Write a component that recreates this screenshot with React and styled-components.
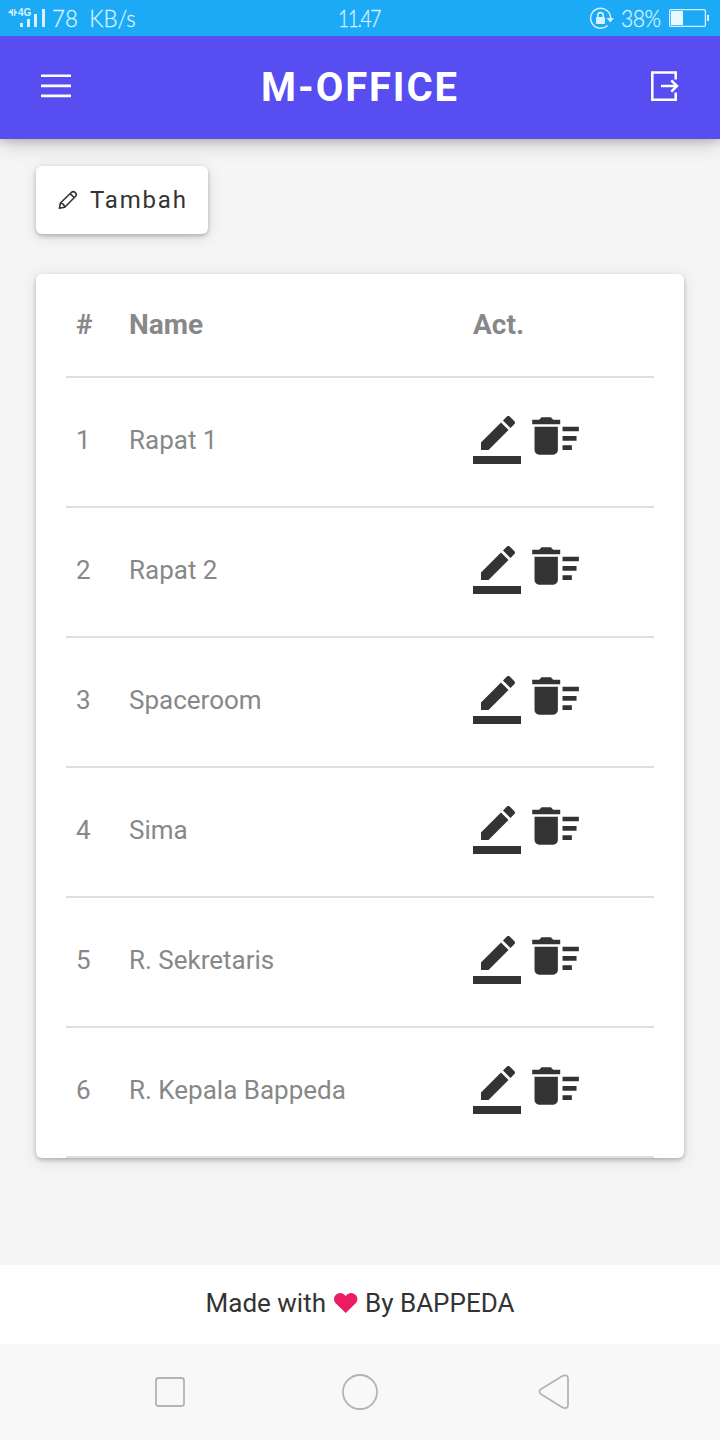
import React from "react";
import styled, { createGlobalStyle } from "styled-components";

const GlobalStyle = createGlobalStyle`
  * { box-sizing: border-box; }
  body { margin: 0; background: #f5f5f5; font-family: Roboto, "Noto Sans", sans-serif; color: #333; }
  svg { display: block; flex: none; }
`;

const Screen = styled.div`
  width: 720px;
  height: 1440px;
  display: flex;
  flex-direction: column;
  overflow: hidden;
  background: #f5f5f5;
`;

const StatusBar = styled.div`
  height: 36px;
  flex: none;
  display: grid;
  grid-template-columns: 1fr auto 1fr;
  align-items: center;
  padding: 0 11px 0 8px;
  position: relative;
  z-index: 1;
  background: #1caaf6;
  color: #dcf3ff;
  font-family: Lato, sans-serif;
  font-weight: 300;
  font-size: 24px;
  line-height: 36px;
`;

const StatusGroup = styled.div`
  display: flex;
  align-items: center;
  justify-content: ${(p) => (p.$end ? "flex-end" : "flex-start")};
`;

const StatusText = styled.span`
  width: ${(p) => p.$width}px;
  margin: 0 ${(p) => p.$right || 0}px 0 ${(p) => p.$left || 0}px;
  letter-spacing: ${(p) => p.$spacing || 0}px;
  word-spacing: ${(p) => p.$word || 0}px;
  white-space: nowrap;
  -webkit-text-stroke: 0.3px currentColor;
  transform: scaleX(${(p) => p.$scale || 1});
  transform-origin: left;
`;

const AppBar = styled.header`
  height: 103px;
  flex: none;
  display: flex;
  align-items: center;
  justify-content: space-between;
  padding: 0 40px;
  background: #574df1;
  box-shadow: 0 4px 20px rgba(0, 0, 0, 0.2), 0 2px 8px rgba(0, 0, 0, 0.16);

  svg {
    margin-bottom: 4px;
  }
`;

const Title = styled.h1`
  margin: 0 2px 0 0;
  color: #fff;
  font-size: 40px;
  line-height: 48px;
  font-weight: 700;
  letter-spacing: 1.9px;
`;

const Content = styled.main`
  flex: 1;
  display: flex;
  flex-direction: column;
  align-items: flex-start;
  gap: 40px;
  padding: 27px 36px 0;
`;

const AddButton = styled.button`
  display: flex;
  align-items: center;
  gap: 12px;
  width: 172px;
  height: 68px;
  padding: 0 0 0 22px;
  border: 0;
  border-radius: 6px;
  background: #fff;
  color: #333;
  font: 400 24px/36px Roboto, sans-serif;
  letter-spacing: 1.8px;
  box-shadow: 0 2px 4px rgba(0, 0, 0, 0.24), 0 3px 16px rgba(0, 0, 0, 0.11);
`;

const Card = styled.section`
  width: 100%;
  padding: 0 30px;
  border-radius: 6px;
  background: #fff;
  box-shadow: 0 2px 4px rgba(0, 0, 0, 0.24), 0 3px 16px rgba(0, 0, 0, 0.11);
`;

const Row = styled.div`
  display: grid;
  grid-template-columns: 53px 344px 1fr;
  align-items: center;
  height: ${(p) => (p.$head ? 104 : 130)}px;
  padding: 0 10px ${(p) => (p.$head ? 2 : 4)}px;
  border-bottom: 2px solid #dfdfdf;
  color: #888;
  font-size: ${(p) => (p.$head ? 28 : 26)}px;
  font-weight: ${(p) => (p.$head ? 700 : 400)};
`;

const Actions = styled.div`
  display: flex;
  align-items: center;
  gap: 7px;
  color: #333;
`;

const EditIcon = styled.svg`
  width: 48px;
  height: 48px;
  fill: currentColor;
`;

const SweepIcon = styled.svg`
  width: 56px;
  height: 56px;
  margin-top: -8px;
  fill: currentColor;
`;

const Footer = styled.footer`
  height: 79px;
  flex: none;
  display: flex;
  align-items: center;
  justify-content: center;
  padding-bottom: 3px;
  background: #fff;
  color: #333;
  font-size: 26px;
`;

const Heart = styled.svg`
  width: 24px;
  height: 22px;
  margin: 0 7px 0 8px;
  fill: #ec1c64;
`;

const NavBar = styled.nav`
  height: 96px;
  flex: none;
  display: grid;
  grid-template-columns: 1fr 38px 1fr;
  align-items: center;
  padding: 0 150px;
  background: #f8f8f8;
`;

const NavIcon = styled.svg`
  justify-self: ${(p) => p.$align || "center"};
  fill: none;
  stroke: #b4b4b4;
  stroke-width: 1.8;
  stroke-linejoin: round;
`;

const rooms = ["Rapat 1", "Rapat 2", "Spaceroom", "Sima", "R. Sekretaris", "R. Kepala Bappeda"];

function Signal() {
  return (
    <svg width="38" height="36" viewBox="8 0 38 36" fill="#d6f1ff">
      <path d="M8 12.4l3-3v2h.7V9h1.5v7h-1.5v-2.4H11zM14.2 9h1.200v2.400h1.200l.9 1-.9 1h-1.200V16h-1.200z" />
      <text x="18" y="16.4" fontFamily="Liberation Sans, sans-serif" fontWeight="700" fontSize="10">4G</text>
      <path d="M20 23h3v4h-3zM27 19h3v8h-3zM34 14h3v13h-3zM42 9h3v18h-3z" />
    </svg>
  );
}

function RotationLock() {
  return (
    <svg width="25" height="36" viewBox="590 0 25 36">
      <path d="M610.6 19a10 10 0 1 0-3 6.4" fill="none" stroke="#d6f1ff" strokeWidth="1.4" />
      <path d="M606.5 18h7.5l-3.7 4.5z" fill="#d6f1ff" />
      <rect x="596" y="17" width="9" height="7" rx="1" fill="#d6f1ff" />
      <path d="M597.8 17.5v-2.2a2.7 2.7 0 0 1 5.4 0v2.2" fill="none" stroke="#d6f1ff" strokeWidth="1.6" />
    </svg>
  );
}

function Battery() {
  return (
    <svg width="40" height="36" viewBox="669 0 40 36">
      <rect x="669.6" y="9.6" width="35.8" height="16.8" rx="1.5" fill="none" stroke="#d6f1ff" strokeWidth="1.3" />
      <path d="M671 11h12v14h-12z" fill="#ebf8ff" />
      <path d="M707 15h2v6h-2z" fill="#d6f1ff" />
    </svg>
  );
}

function MenuIcon() {
  return (
    <svg width="32" height="32" viewBox="40 70 32 32" fill="#fff">
      <path d="M41 74.4h30v2.6H41zM41 84.4h30v2.8H41zM41 94.4h30v2.8H41z" />
    </svg>
  );
}

function LogoutIcon() {
  return (
    <svg width="30" height="32" viewBox="650 70 30 32" fill="none" stroke="#fff" strokeWidth="2.5">
      <path d="M675.7 79.5v-7.1h-23.4v27.3h23.4v-7.3" />
      <path d="M661 86h16M671.3 80.4l5.7 5.6-5.7 5.6" />
    </svg>
  );
}

function PencilIcon() {
  return (
    <svg width="20" height="20" viewBox="58 189 20 20" fill="none" stroke="#333" strokeWidth="1.6" strokeLinejoin="round">
      <path d="M59.4 207.3l1-5.3 10.9-10.5c1.2-1.1 2.6-1.200 4 .1s1.300 2.600.1 3.900L64.700 206.200z" />
      <path d="M60.7 202.200c2.200.2 3.600 1.500 4 4M70.200 192.600l4.200 4.200" />
    </svg>
  );
}

function RoomRow({ number, name }) {
  return (
    <Row>
      <span>{number}</span>
      <span>{name}</span>
      <Actions>
        <EditIcon viewBox="0 0 24 24">
          <path d="M17.75 7L14 3.25l-10 10V17h3.75l10-10zm2.960-2.960c.39-.39.39-1.020 0-1.410L18.370.29a.996.996 0 0 0-1.410 0L15 2.250 18.750 6l1.960-1.960z" />
          <path d="M0 20h24v4H0z" />
        </EditIcon>
        <SweepIcon viewBox="0.2 0 24 24">
          <path d="M15 16h4v2h-4zm0-8h7v2h-7zm0 4h6v2h-6zM3 18c0 1.100.9 2 2 2h6c1.100 0 2-.9 2-2V8H3v10zM14 5h-3l-1-1H6L5 5H2v2h12z" />
        </SweepIcon>
      </Actions>
    </Row>
  );
}

export default function App() {
  return (
    <Screen>
      <GlobalStyle />
      <StatusBar>
        <StatusGroup>
          <Signal />
          <StatusText $width={86} $left={6} $scale={0.925} $word={6}>78 KB/s</StatusText>
        </StatusGroup>
        <StatusText $width={41} $scale={0.8} $spacing={-1.8}>11.47</StatusText>
        <StatusGroup $end>
          <RotationLock />
          <StatusText $width={40} $left={6} $right={8} $scale={0.88} $spacing={-0.5}>38%</StatusText>
          <Battery />
        </StatusGroup>
      </StatusBar>
      <AppBar>
        <MenuIcon />
        <Title>M-OFFICE</Title>
        <LogoutIcon />
      </AppBar>
      <Content>
        <AddButton>
          <PencilIcon />
          Tambah
        </AddButton>
        <Card>
          <Row $head>
            <span>#</span>
            <span>Name</span>
            <span>Act.</span>
          </Row>
          {rooms.map((name, i) => (
            <RoomRow key={name} number={i + 1} name={name} />
          ))}
        </Card>
      </Content>
      <Footer>
        <span>Made with</span>
        <Heart viewBox="0.3 0 24 22">
          <path d="M12 21L2 11.2C-.8 8.2 0 3.300 3.700 1.700 6.700.4 9.800 1.300 12 4c2.200-2.700 5.300-3.600 8.300-2.300C24 3.300 24.800 8.200 22 11.200z" />
        </Heart>
        <span>By BAPPEDA</span>
      </Footer>
      <NavBar>
        <NavIcon $align="start" width="36" height="32" viewBox="-4 0 36 32">
          <rect x="2" y="2" width="28" height="28" rx="2.5" />
        </NavIcon>
        <NavIcon width="38" height="38" viewBox="0 0 38 38">
          <circle cx="19" cy="19" r="17" />
        </NavIcon>
        <NavIcon $align="end" width="32" height="36" viewBox="538 1374 32 36">
          <path d="M540.8 1389.3L562 1376.200c3-1.800 6-.8 6 2v27c0 2.800-3 3.800-6 2L540.800 1394c-1.800-1.200-1.800-3.500 0-4.700z" />
        </NavIcon>
      </NavBar>
    </Screen>
  );
}
